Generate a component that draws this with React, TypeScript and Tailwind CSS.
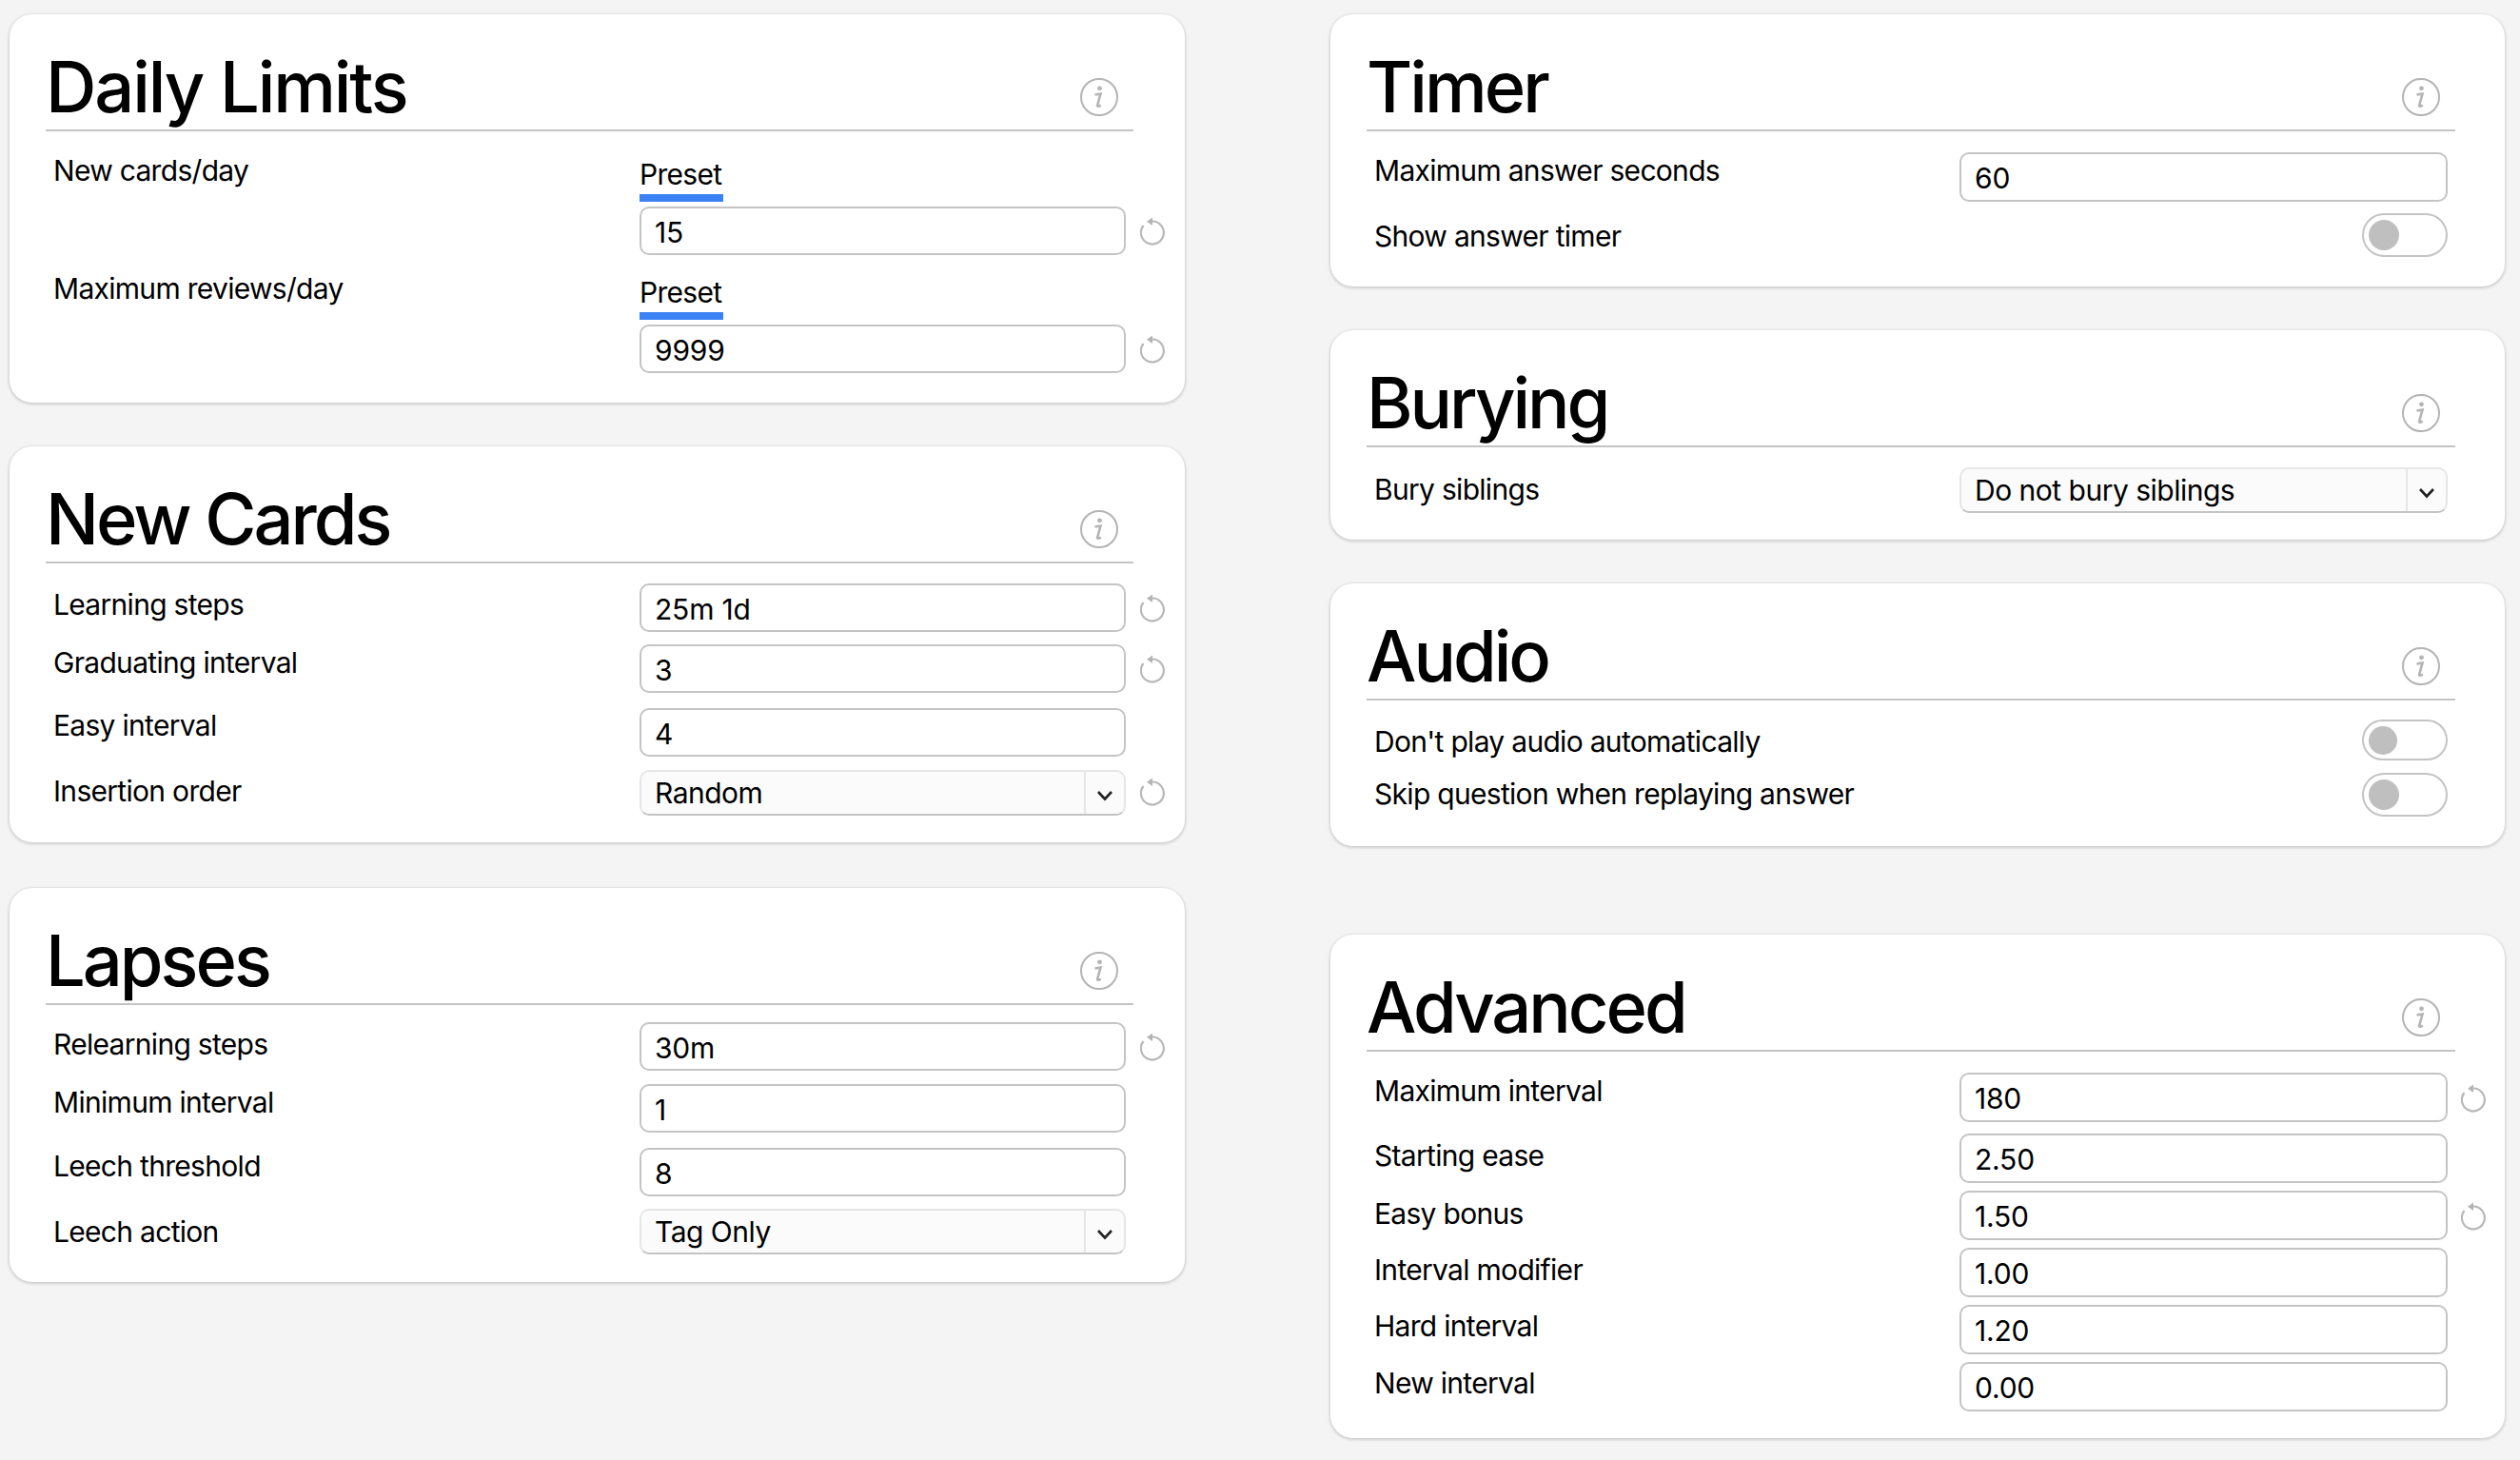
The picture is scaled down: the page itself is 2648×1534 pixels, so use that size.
import type { ReactNode } from "react";

// -----------------------------------------------------------------------------------

function InfoIcon() {
  return (
    <svg width="40" height="40" viewBox="0 0 40 40" fill="none" className="shrink-0">
      <circle cx="20" cy="20" r="19" stroke="#b4b4b4" strokeWidth="2" />
      <circle cx="20.5" cy="10.8" r="2.4" fill="#b4b4b4" />
      <path d="M15.5 17.5 L21.5 16.5 L18.2 28.5 Q17.8 31 21.8 28.6" stroke="#b4b4b4" strokeWidth="2.6" />
    </svg>
  );
}

function ResetIcon() {
  return (
    <svg width="26" height="30" viewBox="0 0 26 30" fill="none" className="-mt-[3px]">
      <path d="M13 4.5 A12 12 0 1 1 3.5 9" stroke="#b8b8b8" strokeWidth="2.2" />
      <polygon points="13,0.5 13,9 7,4.8" fill="#b4b4b4" />
    </svg>
  );
}

function Input({ value, tall }: { value: string; tall?: boolean }) {
  return (
    <div
      className={`${tall ? "h-[52px]" : "h-[51px]"} rounded-[10px] border-2 border-[#c4c4c4] bg-white pl-[14px] pt-[3px] flex items-center text-black tracking-[-0.2px]`}
    >
      {value}
    </div>
  );
}

function Select({ value }: { value: string }) {
  return (
    <div className="h-[48px] rounded-[10px] border-2 border-[#e6e6e6] border-b-[#c4c4c4] bg-[#fbfbfb] flex items-stretch text-black tracking-[-0.5px]">
      <span className="flex-1 pl-[14px] flex items-center">{value}</span>
      <span className="w-[42px] border-l-2 border-[#e6e6e6] flex items-center justify-center">
        <svg width="18" height="12" viewBox="0 0 18 12" fill="none" className="mt-[6px]">
          <path d="M2 2 L9 9.5 L16 2" stroke="#222222" strokeWidth="2.6" />
        </svg>
      </span>
    </div>
  );
}

function Toggle({ small }: { small?: boolean }) {
  return (
    <div
      className={`ml-auto w-[90px] ${small ? "h-[43px]" : "h-[46px]"} rounded-full border-2 border-[#c4c4c4] bg-white flex items-center pl-[5px]`}
    >
      <span className={`${small ? "w-[30px] h-[30px]" : "w-[32px] h-[32px]"} rounded-full bg-[#bfbfbf]`} />
    </div>
  );
}

function Preset() {
  return (
    <div className="mb-[5px]">
      <div className="leading-[36px]">Preset</div>
      <div className="mt-[3px] w-[88px] h-[8px] bg-[#3b82f6]" />
    </div>
  );
}

type RowProps = {
  label: string;
  className?: string;
  labelClass?: string;
  reset?: boolean;
  right?: boolean;
  children: ReactNode;
};

function Row({ label, className, labelClass, reset, right, children }: RowProps) {
  return (
    <div className={`grid ${right ? "grid-cols-[623px_1fr_40px]" : "grid-cols-[624px_1fr_40px]"} ${className ?? ""}`}>
      <div className={`pl-2 leading-[36px] text-black ${labelClass ?? ""}`}>{label}</div>
      <div>{children}</div>
      {reset ? (
        <div className={`flex items-end ${right ? "pl-[14px]" : "pl-[15px]"}`}>
          <div className="h-[48px] flex items-center">
            <ResetIcon />
          </div>
        </div>
      ) : (
        <div />
      )}
    </div>
  );
}

type CardProps = {
  title: string;
  className?: string;
  titleClass?: string;
  right?: boolean;
  children: ReactNode;
};

function Card({ title, className, titleClass, right, children }: CardProps) {
  return (
    <section
      className={`rounded-[24px] bg-white pl-[38px] shadow-[0_1px_3px_1px_rgba(0,0,0,0.16)] ${right ? "pr-[20px]" : "pr-[22px]"} ${className ?? ""}`}
    >
      <header className="h-[123px] mr-[32px] flex items-end justify-between border-b-2 border-[#c4c4c4]">
        <h1 className={`text-[74px] leading-[74px] font-[550] text-black pb-[8px] ${titleClass ?? "tracking-[-3px]"}`}>
          {title}
        </h1>
        <div className="mr-4 mb-[14px]">
          <InfoIcon />
        </div>
      </header>
      {children}
    </section>
  );
}

// -----------------------------------------------------------------------------------

export default function App() {
  return (
    <div className="min-h-screen bg-[#f4f4f4] pl-[10px] pt-[15px] flex items-start font-['Inter',sans-serif] text-[30px] tracking-[-0.7px]">
      <div className="w-[1235px] flex flex-col">
        {/* Daily Limits */}
        <Card title="Daily Limits" className="pb-[31px]" titleClass="tracking-[-2.1px]">
          <Row label="New cards/day" className="mt-[27px]" labelClass="-mt-1" reset>
            <Preset />
            <Input value="15" />
          </Row>
          <Row label="Maximum reviews/day" className="mt-[21px]" labelClass="-mt-1" reset>
            <Preset />
            <Input value="9999" />
          </Row>
        </Card>

        {/* New Cards */}
        <Card title="New Cards" className="mt-[46px] pb-[28px]">
          <Row label="Learning steps" className="mt-[21px]" labelClass="pt-1" reset>
            <Input value="25m 1d" />
          </Row>
          <Row label="Graduating interval" className="mt-[13px]" labelClass="pt-px" reset>
            <Input value="3" />
          </Row>
          <Row label="Easy interval" className="mt-[16px]">
            <Input value="4" />
          </Row>
          <Row label="Insertion order" className="mt-[14px]" labelClass="pt-1" reset>
            <Select value="Random" />
          </Row>
        </Card>

        {/* Lapses */}
        <Card title="Lapses" className="mt-[48px] pb-[29px]">
          <Row label="Relearning steps" className="mt-[18px]" labelClass="pt-[5px]" reset>
            <Input value="30m" />
          </Row>
          <Row label="Minimum interval" className="mt-[14px]" labelClass="pt-px">
            <Input value="1" />
          </Row>
          <Row label="Leech threshold" className="mt-[16px]" labelClass="pt-px">
            <Input value="8" />
          </Row>
          <Row label="Leech action" className="mt-[13px]" labelClass="pt-[6px]">
            <Select value="Tag Only" />
          </Row>
        </Card>
      </div>

      <div className="ml-[153px] w-[1234px] flex flex-col">
        {/* Timer */}
        <Card title="Timer" className="pb-[31px]" right>
          <Row label="Maximum answer seconds" className="mt-[22px]" labelClass="pt-px" right>
            <Input value="60" tall />
          </Row>
          <Row label="Show answer timer" className="mt-[12px]" labelClass="pt-[6px]" right>
            <Toggle />
          </Row>
        </Card>

        {/* Burying */}
        <Card title="Burying" className="mt-[46px] pb-[28px]" right>
          <Row label="Bury siblings" className="mt-[21px]" labelClass="pt-[5px]" right>
            <Select value="Do not bury siblings" />
          </Row>
        </Card>

        {/* Audio */}
        <Card title="Audio" className="mt-[46px] pb-[31px]" right>
          <Row label="Don't play audio automatically" className="mt-[20px]" labelClass="pt-[5px]" right>
            <Toggle small />
          </Row>
          <Row label="Skip question when replaying answer" className="mt-[13px]" labelClass="pt-1" right>
            <Toggle />
          </Row>
        </Card>

        {/* Advanced */}
        <Card title="Advanced" className="mt-[93px] pb-[28px]" right>
          <Row label="Maximum interval" className="mt-[22px]" labelClass="pt-px" reset right>
            <Input value="180" tall />
          </Row>
          <Row label="Starting ease" className="mt-[12px]" labelClass="pt-[5px]" right>
            <Input value="2.50" tall />
          </Row>
          <Row label="Easy bonus" className="mt-[8px]" labelClass="pt-[6px]" reset right>
            <Input value="1.50" tall />
          </Row>
          <Row label="Interval modifier" className="mt-[8px]" labelClass="pt-[5px]" right>
            <Input value="1.00" tall />
          </Row>
          <Row label="Hard interval" className="mt-[8px]" labelClass="pt-1" right>
            <Input value="1.20" tall />
          </Row>
          <Row label="New interval" className="mt-[8px]" labelClass="pt-1" right>
            <Input value="0.00" tall />
          </Row>
        </Card>
      </div>
    </div>
  );
}
